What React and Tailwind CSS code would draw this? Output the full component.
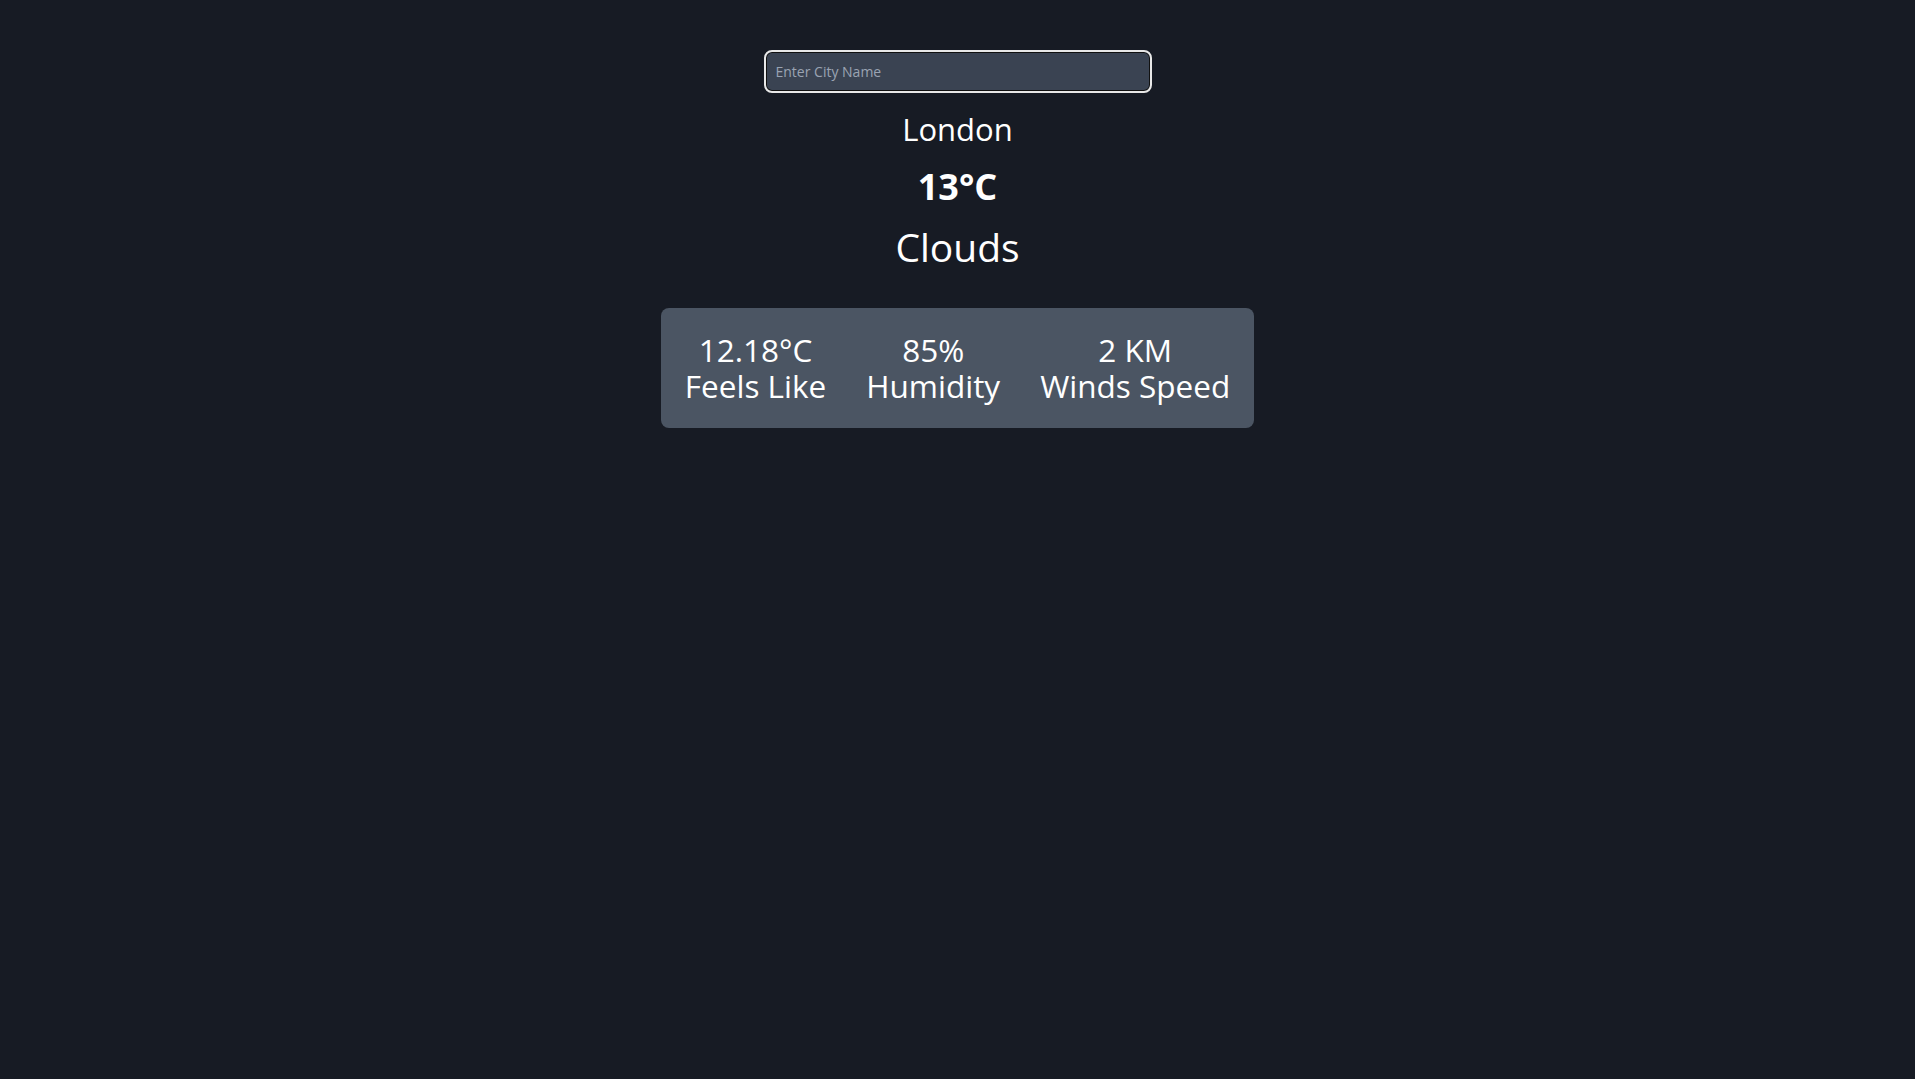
export default function App() {
  const font = { fontFamily: '"Open Sans", "Noto Sans", sans-serif' };
  return (
    <div
      className="min-h-screen w-full bg-[#171b24] text-white flex flex-col items-center pt-[50px]"
      style={font}
    >
      <input
        type="text"
        placeholder="Enter City Name"
        className="w-[388px] h-[43px] rounded-lg border-2 border-[#e8e8e8] bg-[#3a4352] px-[10px] text-sm text-white placeholder:text-[#9aa3b2] outline-none shadow-[inset_0_0_0_1px_#111]"
      />
      <div className="mt-[18px] text-[31px] leading-9">London</div>
      <div className="mt-[20px] text-4xl leading-10 font-bold">13°C</div>
      <div className="mt-[20px] text-[39px] leading-10">Clouds</div>
      <div className="mt-[41px] flex gap-10 rounded-lg bg-[#4b5563] p-6 text-[31.5px] leading-9 text-center">
        <div className="flex flex-col">
          <span>12.18°C</span>
          <span>Feels Like</span>
        </div>
        <div className="flex flex-col">
          <span>85%</span>
          <span>Humidity</span>
        </div>
        <div className="flex flex-col">
          <span>2 KM</span>
          <span>Winds Speed</span>
        </div>
      </div>
    </div>
  );
}
